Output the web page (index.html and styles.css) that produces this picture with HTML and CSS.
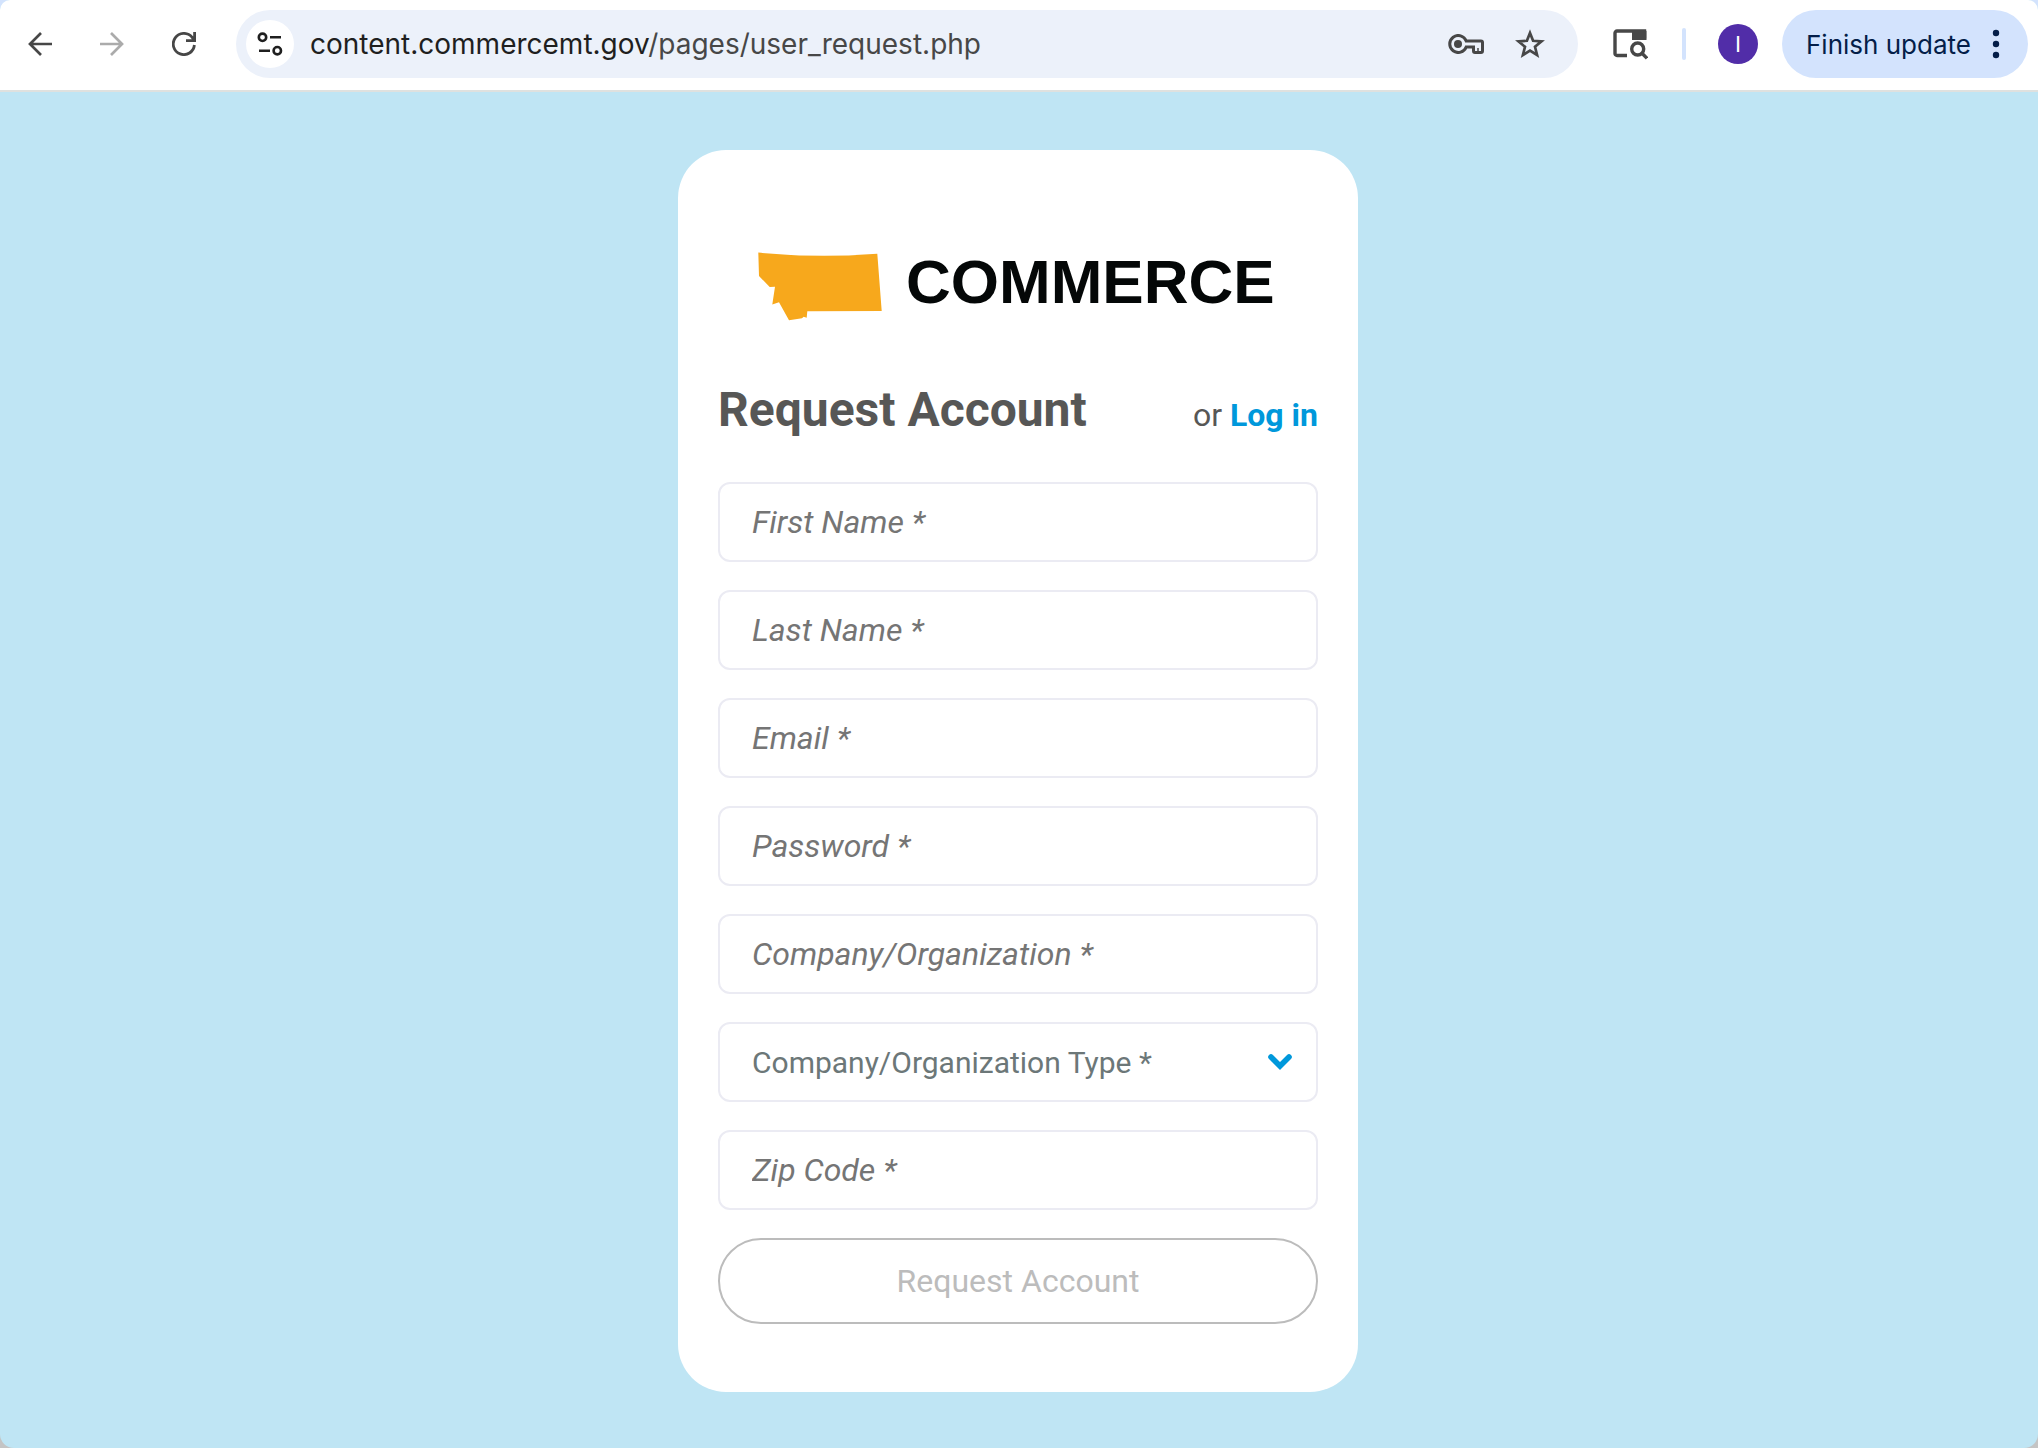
FILE: index.html
```html
<!DOCTYPE html>
<html lang="en">
<head>
<meta charset="utf-8">
<meta name="viewport" content="width=device-width, initial-scale=1">
<title>Request Account</title>
<link rel="stylesheet" href="styles.css">
</head>
<body>
<div class="window">
  <header class="toolbar">
    <nav class="nav" aria-label="Browser navigation">
      <button class="icon-button" type="button" aria-label="Back">
        <svg width="24" height="24" viewBox="0 0 24 24" fill="none" stroke="#474747" stroke-width="2.7"><path d="M24 12H2M13 1L2 12l11 11"/></svg>
      </button>
      <button class="icon-button" type="button" aria-label="Forward" disabled>
        <svg width="24" height="24" viewBox="0 0 24 24" fill="none" stroke="#ababab" stroke-width="2.7"><path d="M0 12h22M11 1l11 11-11 11"/></svg>
      </button>
      <button class="icon-button" type="button" aria-label="Reload">
        <svg width="24" height="24" viewBox="0 0 24 24" fill="none" stroke="#474747" stroke-width="2.8"><path d="M22.4 13A10.6 10.6 0 1 1 20 5.200L22 8M22.600 0v8.600H14"/></svg>
      </button>
    </nav>
    <div class="address">
      <button class="site-info" type="button" aria-label="View site information">
        <svg width="26" height="24" viewBox="0 0 26 24" fill="none" stroke="#1f1f1f" stroke-width="2.600"><circle cx="5.500" cy="5.300" r="3.700"/><path d="M13 5.300h11M2 18.700h11"/><circle cx="20.300" cy="18.700" r="3.700"/></svg>
      </button>
      <div class="url" role="textbox" aria-label="Address" contenteditable="true" spellcheck="false"><span class="url-host">content.commercemt.gov</span>/pages/user_request.php</div>
      <div class="address-actions">
        <button type="button" aria-label="Passwords">
          <svg width="36" height="20" viewBox="0 0 36 20" fill="none" stroke="#474747" stroke-width="3"><path d="M18.200 7H33a1.500 1.500 0 0 1 1.500 1.500v8.500a1.500 1.500 0 0 1-1.500 1.500h-6a1.500 1.500 0 0 1-1.500-1.500V13H18.200A8.500 8.500 0 1 1 18.200 7z"/><circle cx="10" cy="10" r="4" fill="#474747" stroke="none"/><path d="M30 14v4" stroke-width="1.500"/></svg>
        </button>
        <button type="button" aria-label="Bookmark this tab">
          <svg width="32" height="32" viewBox="0 0 32 32" fill="none" stroke="#474747" stroke-width="2.700"><path d="M16 5l3.100 7.800 8.400.6-6.500 5.400 2.100 8.200L16 22.600 8.900 27l2.100-8.200-6.500-5.400 8.400-.6z"/></svg>
        </button>
      </div>
    </div>
    <button class="panel-button" type="button" aria-label="Search side panel">
      <svg width="36" height="32" viewBox="0 0 36 32" fill="none" stroke="#474747" stroke-width="3.400"><path d="M15 27.500H5a2 2 0 0 1-2-2V5a2 2 0 0 1 2-2h27.500v7.500"/><path d="M20 2h13a1.500 1.500 0 0 1 1.500 1.500V12H20z" fill="#474747" stroke="none"/><circle cx="25.700" cy="21" r="6"/><path d="M29.500 24.800l5.500 5.500"/></svg>
    </button>
    <span class="divider"></span>
    <button class="avatar" type="button">I</button>
    <button class="update" type="button">
      <span>Finish update</span>
      <svg width="8" height="30" viewBox="0 0 8 30" fill="#041e49"><circle cx="4" cy="4" r="3.200"/><circle cx="4" cy="15" r="3.200"/><circle cx="4" cy="26" r="3.200"/></svg>
    </button>
  </header>

  <main class="page">
    <section class="card">
      <div class="logo">
        <svg width="124" height="70" viewBox="0 0 124 70" fill="#f7a81c"><path d="M.3.600Q60 6.500 119.300 1.700L123.700 59 49.300 59.300 48.700 65.700 45.700 64.700 44 66.300 31 68.300 21 50.300 14.300 52.500 17 34.700 11.700 35 1 24z"/></svg>
        <span class="wordmark">COMMERCE</span>
      </div>
      <div class="heading">
        <h1 class="title">Request Account</h1>
        <p class="login">or <a class="login-link" href="#login">Log in</a></p>
      </div>
      <form class="form">
        <input class="field" type="text" aria-label="First Name" placeholder="First Name *">
        <input class="field" type="text" aria-label="Last Name" placeholder="Last Name *">
        <input class="field" type="email" aria-label="Email" placeholder="Email *">
        <input class="field" type="password" aria-label="Password" placeholder="Password *">
        <input class="field" type="text" aria-label="Company/Organization" placeholder="Company/Organization *">
        <div class="select-wrap">
          <select class="field field-select" aria-label="Company/Organization Type"><option>Company/Organization Type *</option></select>
          <svg class="chevron" width="24" height="16" viewBox="0 0 24 16" fill="none" stroke="#0098db" stroke-width="5.600"><path d="M3 3l9 9 9-9" stroke-linecap="round"/></svg>
        </div>
        <input class="field" type="text" aria-label="Zip Code" placeholder="Zip Code *">
        <button class="submit" type="submit" disabled>Request Account</button>
      </form>
    </section>
  </main>
</div>
</body>
</html>
```
FILE: styles.css
```css
* {
  box-sizing: border-box;
}

html {
  background: linear-gradient(#d3e3fd 50%, #c4c4c4 50%);
}

body {
  margin: 0;
  font-family: Roboto, "Liberation Sans", sans-serif;
}

button {
  padding: 0;
  border: 0;
  background: none;
  font: inherit;
}

svg {
  display: block;
  flex: none;
}

.window {
  display: flex;
  flex-direction: column;
  min-height: 100vh;
  overflow: hidden;
  border-radius: 10px 10px 14px 14px;
  background: #bfe5f4;
}

/* Browser toolbar */

.toolbar {
  display: flex;
  align-items: center;
  height: 92px;
  padding: 10px 10px 12px 4px;
  border-bottom: 2px solid #dfe1df;
  background: #fff;
  font-family: Inter, "Liberation Sans", sans-serif;
}

.nav {
  display: flex;
  margin-right: 16px;
}

.icon-button {
  display: flex;
  align-items: center;
  justify-content: center;
  width: 72px;
  height: 68px;
}

.address {
  display: flex;
  flex: 1;
  align-items: center;
  gap: 16px;
  min-width: 0;
  height: 68px;
  padding: 0 32px 0 10px;
  border-radius: 34px;
  background: #ecf1fa;
}

.site-info {
  display: flex;
  align-items: center;
  justify-content: center;
  width: 48px;
  height: 48px;
  border-radius: 50%;
  background: #fff;
}

.url {
  flex: 1;
  overflow: hidden;
  color: #474747;
  font-size: 28px;
  line-height: 36px;
  white-space: nowrap;
}

.url-host {
  color: #1f1f1f;
}

.address-actions {
  display: flex;
  align-items: center;
  gap: 30px;
}

.panel-button {
  margin: 0 34px;
}

.divider {
  width: 4px;
  height: 32px;
  border-radius: 2px;
  background: #d3e3fd;
}

.avatar {
  width: 40px;
  height: 40px;
  margin: 0 24px 0 32px;
  border-radius: 50%;
  background: #512da8;
  color: #fff;
  font-family: Roboto, sans-serif;
  font-size: 22px;
}

.update {
  display: flex;
  align-items: center;
  justify-content: space-between;
  width: 246px;
  height: 68px;
  padding: 0 28px 0 24px;
  border-radius: 34px;
  background: #d3e3fd;
  color: #041e49;
  font-size: 26px;
  white-space: nowrap;
}

/* Request form */

.page {
  flex: 1;
  padding: 58px 26px 56px 24px;
}

.card {
  width: 100%;
  max-width: 680px;
  margin: 0 auto;
  padding: 102px 40px 68px;
  border-radius: 48px;
  background: #fff;
}

.logo {
  display: flex;
  align-items: flex-start;
  gap: 24px;
  margin-bottom: 60px;
  padding-left: 40px;
}

.wordmark {
  color: #040707;
  font-family: "Liberation Sans", Arial, sans-serif;
  font-size: 62px;
  font-weight: 700;
  line-height: 60px;
}

.heading {
  display: flex;
  align-items: baseline;
  justify-content: space-between;
  margin-bottom: 44px;
  color: #575756;
}

.title {
  margin: 0;
  font-size: 48px;
  font-weight: 700;
  line-height: 56px;
}

.login {
  margin: 0;
  font-size: 32px;
  line-height: 40px;
}

.login-link {
  color: #0098db;
  font-weight: 700;
  text-decoration: none;
}

.form {
  display: flex;
  flex-direction: column;
  gap: 28px;
}

.field {
  display: block;
  width: 100%;
  height: 80px;
  padding: 0 32px;
  border: 2px solid #ebebf3;
  border-radius: 12px;
  background: #fff;
  color: #575756;
  font-family: inherit;
  font-size: 32px;
}

.field::placeholder {
  color: #757575;
  font-style: italic;
  opacity: 1;
}

.select-wrap {
  position: relative;
}

.field-select {
  appearance: none;
  color: #6c7778;
  font-size: 30px;
}

.chevron {
  position: absolute;
  top: 32px;
  right: 26px;
  pointer-events: none;
}

.submit {
  height: 86px;
  border: 2px solid #bcbcbc;
  border-radius: 43px;
  color: #bcbcbc;
  font-size: 32px;
}
```
